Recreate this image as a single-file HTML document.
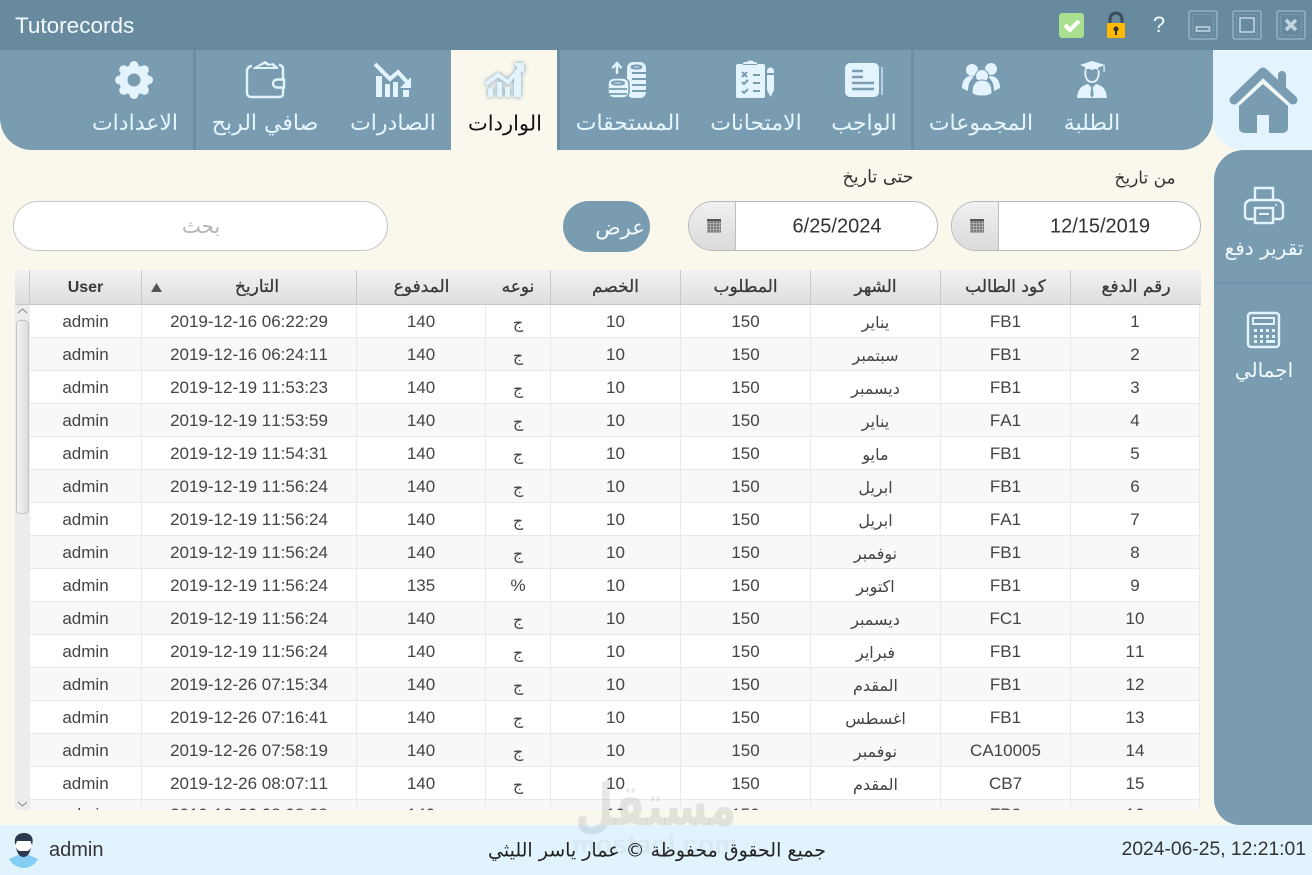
<!DOCTYPE html>
<html lang="ar"><head><meta charset="utf-8"><title>Tutorecords</title>
<style>
*{box-sizing:border-box}
html,body{margin:0;padding:0}
body{width:1312px;height:875px;overflow:hidden;position:relative;background:#faf8ec;font-family:"DejaVu Sans","Liberation Sans",sans-serif;color:#333}
.a{position:absolute}
.t{position:absolute;white-space:nowrap;transform:translate(-50%,-50%);line-height:1}
.nav{font-size:22px;color:#e6f6ff;top:124px}
svg{position:absolute;overflow:visible}
.fld{position:absolute;top:201px;height:50px;border:1px solid #b8b8b8;border-radius:25px;background:#fff;overflow:hidden}
.fld i{position:absolute;left:0;top:0;bottom:0;width:47px;background:linear-gradient(#f0f0f0,#dadada);border-right:1px solid #bdbdbd}
.fld b{position:absolute;left:18px;top:17px;width:14px;height:14px;background-color:#777;background-image:repeating-linear-gradient(0deg,#aaa 0 1px,transparent 1px 3px),repeating-linear-gradient(90deg,#aaa 0 1px,transparent 1px 3px);border-top:2px solid #555}
.v{font:20px "Liberation Sans",sans-serif;color:#333;top:227px}
table{position:absolute;left:30px;top:0;width:1170px;border-collapse:separate;border-spacing:0;table-layout:fixed;font:17px "Liberation Sans","DejaVu Sans",sans-serif;font-kerning:none;color:#444}
td{height:33px;padding:2px 0 0;text-align:center;border-right:1px solid #e9e9e9;border-bottom:1px solid #e9e9e9;white-space:nowrap;overflow:hidden}
td.ar{font:16px "DejaVu Sans",sans-serif}
tr:nth-child(even) td{background:#f8f8f8}
tr:nth-child(odd) td{background:#fff}
.hc{position:absolute;top:270px;height:35px;background:linear-gradient(#f2f2f2,#dedede);border-right:1px solid #c8c8c8;border-bottom:1px solid #c8c8c8;font:17px "DejaVu Sans",sans-serif;-webkit-text-stroke:.3px #3a3a3a;color:#3a3a3a;text-align:center;line-height:35px}
</style></head><body>

<!-- title bar -->
<div class="a" style="left:0;top:0;width:1312px;height:50px;background:#678a9f"></div>
<div class="a" style="left:15px;top:12px;font:22.500px/27px 'Liberation Sans',sans-serif;color:#f4fbff">Tutorecords</div>

<svg style="left:0;top:0" width="1312" height="50">
  <rect x="1059" y="13" width="25" height="25" rx="3" fill="#a9e08f"/>
  <path d="M1065 25l5 5 9-9" fill="none" stroke="#fff" stroke-width="4"/>
  <path d="M1110 24v-5a6 6 0 0 1 12 0v5" fill="none" stroke="#3d4a5c" stroke-width="3"/>
  <rect x="1107" y="23" width="18" height="15" rx="1" fill="#ffb900"/>
  <circle cx="1116" cy="29" r="2.500" fill="#333"/><rect x="1115" y="29" width="2" height="6" fill="#333"/>
  <g fill="none" stroke="#94b1c3" stroke-width="1.500">
    <rect x="1189" y="11" width="28" height="28" rx="2"/>
    <rect x="1233" y="11" width="28" height="28" rx="2"/>
    <rect x="1277" y="11" width="28" height="28" rx="2"/>
  </g>
  <g fill="none" stroke="#86a6b9" stroke-width="1" stroke-dasharray="1.500 1.500">
    <rect x="1192.500" y="14.500" width="21" height="21"/>
    <rect x="1236.500" y="14.500" width="21" height="21"/>
    <rect x="1280.500" y="14.500" width="21" height="21"/>
  </g>
  <g fill="none" stroke="#c3d6e2">
    <rect x="1196.500" y="27" width="13" height="4" stroke-width="1.500"/>
    <rect x="1240" y="18" width="14" height="14" stroke-width="1.500"/>
    <path d="M1286 20l10 10M1296 20l-10 10" stroke-width="3.500"/>
  </g>
</svg>
<div class="t" style="left:1159px;top:25px;font:22px 'Liberation Sans',sans-serif;color:#f4fbff">?</div>

<!-- home tile -->
<div class="a" style="left:1213px;top:50px;width:99px;height:100px;background:#e3f4ff;border-bottom-left-radius:30px"></div>
<!-- nav -->
<div class="a" style="left:0;top:50px;width:1213px;height:100px;background:#7a9cb1;border-radius:0 0 32px 32px"></div>
<div class="a" style="left:451px;top:50px;width:106px;height:100px;background:#faf8ec"></div>
<div class="a" style="left:193px;top:50px;width:3px;height:100px;background:#6a8ea4"></div>
<div class="a" style="left:557px;top:50px;width:3px;height:100px;background:#6a8ea4"></div>
<div class="a" style="left:911px;top:50px;width:3px;height:100px;background:#6a8ea4"></div>

<svg style="left:0;top:0" width="1312" height="150">
 <g fill="#e3f4ff">
  <!-- gear -->
  <g transform="translate(134 80)">
    <circle r="15"/>
    <circle cx="0" cy="-14.500" r="4.500"/><circle cx="0" cy="14.500" r="4.500"/><circle cx="14.500" cy="0" r="4.500"/><circle cx="-14.500" cy="0" r="4.500"/><circle cx="10.300" cy="10.300" r="4.500"/><circle cx="-10.300" cy="10.300" r="4.500"/><circle cx="10.300" cy="-10.300" r="4.500"/><circle cx="-10.300" cy="-10.300" r="4.500"/>
    <circle r="6.500" fill="#7a9cb1"/>
  </g>
  <!-- wallet -->
  <g fill="none" stroke="#e3f4ff" stroke-width="2.400">
    <path d="M283 79V69c0-3-2-4-4-4M283 88v6a3 3 0 0 1-3 3H251a4 4 0 0 1-4-4V71a5 5 0 0 1 5-5"/>
    <path d="M284 79.500h-7a4 4 0 0 0 0 8h7z"/>
  </g>
  <path d="M253 68l12-7 5 3 3-1 6 5-2 1h-24z"/>
  <path d="M258 67l7-3 3 2 3-1 3 2z" fill="#7a9cb1"/>
  <!-- expense chart -->
  <path d="M375 64L390 79 398 72 407 82" fill="none" stroke="#e3f4ff" stroke-width="4"/>
  <path d="M411 77v11h-11z"/>
  <path d="M376 76h6v21h-6zM385 84h5v13h-5zM393 82h5v15h-5z"/><rect x="403" y="90" width="6" height="7"/>
  <!-- income chart -->
  <g style="filter:drop-shadow(0 0 2px #6f93a9)">
    <path d="M486 84L498 75 508 82 520 68" fill="none" stroke="#e3f4ff" stroke-width="4"/>
    <path d="M513 63h11v11z"/>
    <path d="M488 89l5-3v11h-5zM497 82h5v15h-5zM505 87h5v10h-5zM514 76l7-7v28h-7z"/>
  </g>
  <!-- coins -->
  <rect x="627" y="62" width="19" height="36" rx="6"/>
  <rect x="608" y="78" width="21" height="20" rx="6" stroke="#7a9cb1" stroke-width="1.500"/>
  <g fill="none" stroke="#7a9cb1" stroke-width="2">
    <ellipse cx="636.500" cy="67" rx="5" ry="1.500"/>
    <path d="M632 73h14M632 79h14M632 85h14M632 91h14"/>
    <ellipse cx="618" cy="83" rx="6" ry="1.500"/>
    <path d="M609 89h18M609 94h18" stroke-width="1.800"/>
  </g>
  <path d="M617 74V63M612.500 68l4.500-5 4.500 5" fill="none" stroke="#e3f4ff" stroke-width="2.400"/>
  <!-- clipboard -->
  <path d="M738 64h5c0-2 2-2 4-2 1-2 6-2 7 0 2 0 3 0 3 2h6a2 2 0 0 1 2 2v30a2 2 0 0 1-2 2h-25a2 2 0 0 1-2-2V66a2 2 0 0 1 2-2z"/>
  <path d="M767 71a3.500 3.500 0 0 1 7 0v2h-7zM767 75h7v15l-3.500 7-3.500-7z"/>
  <g fill="none" stroke="#7a9cb1" stroke-width="2">
    <path d="M742 72l5 5M747 72l-5 5M742 82l2 2 4-4M742 91l2 2 4-4M753 75h7M753 83h7M753 91h7"/>
    <path d="M743 64.500h14" stroke-width="1"/>
  </g>
  <!-- homework -->
  <rect x="845" y="63" width="34" height="34" rx="5"/>
  <path d="M882 67v28" stroke="#e3f4ff" stroke-width="1.200"/>
  <g fill="none" stroke="#7a9cb1" stroke-width="2.400"><path d="M852 71h11M852 77h11M852 83h22M852 89h22"/></g>
  <!-- group -->
  <circle cx="972" cy="70" r="6"/><circle cx="991" cy="69" r="6"/>
  <path d="M962 88c0-8 4-12 9-12l3 1c-4 3-6 7-6 14zM1000 88c0-8-4-12-9-12l-3 1c4 3 6 7 6 14z"/>
  <circle cx="982" cy="76" r="6.500" stroke="#7a9cb1"/>
  <path d="M972 93c0-9 4-13 10-13s10 4 10 13c-3 4-17 4-20 0z" stroke="#7a9cb1"/>
  <!-- student -->
  <path d="M1080 65l12-4 13 4-13 5z"/><rect x="1103.500" y="65" width="1.200" height="7"/>
  <path d="M1085 67v3c4-2 9-2 13 0v-3l-6 2z"/>
  <path d="M1085.500 70c-1 8 2 12 6.500 12s7.500-4 6.500-12" fill="none" stroke="#e3f4ff" stroke-width="1.800"/>
  <path d="M1077 98c1-9 4-12 11-14l4 4 4-4c7 2 10 5 11 14z"/>
  <path d="M1091.300 87h1.400l1 8-1.700 3-1.700-3z" fill="#7a9cb1"/>
 </g>
 <!-- home -->
 <g>
  <path d="M1282 86V75" stroke="#7a9cb1" stroke-width="8" stroke-linecap="round"/>
  <path d="M1234 100l29-28 30 28" fill="none" stroke="#7a9cb1" stroke-width="9" stroke-linecap="round" stroke-linejoin="round"/>
  <path d="M1263 84l-24 22v22a5 5 0 0 0 5 5h13v-18h12v18h14a5 5 0 0 0 5-5v-22z" fill="#7a9cb1"/>
  <path d="M1240 103l23-21 24 21" fill="none" stroke="#faf8ec" stroke-width="2"/>
 </g>
</svg>

<span class="t nav" style="left:135px">الاعدادات</span>
<span class="t nav" style="left:265px">صافي الربح</span>
<span class="t nav" style="left:393px">الصادرات</span>
<span class="t nav" style="left:505px;color:#111;font-size:21px">الواردات</span>
<span class="t nav" style="left:628px">المستحقات</span>
<span class="t nav" style="left:756px">الامتحانات</span>
<span class="t nav" style="left:864px">الواجب</span>
<span class="t nav" style="left:981px">المجموعات</span>
<span class="t nav" style="left:1092px">الطلبة</span>

<!-- sidebar -->
<div class="a" style="left:1214px;top:150px;width:98px;height:675px;background:#7a9cb1;border-radius:30px 0 0 26px"></div>
<div class="a" style="left:1214px;top:282px;width:98px;height:2px;background:#6f93a9"></div>
<svg style="left:0;top:0" width="1312" height="400">
 <g fill="none" stroke="#e3f4ff" stroke-width="2.400">
  <path d="M1254 219h-6a3 3 0 0 1-3-3v-10a6 6 0 0 1 6-6h26a6 6 0 0 1 6 6v10a3 3 0 0 1-3 3h-6"/>
  <path d="M1255 200v-12h18v12"/>
  <rect x="1255" y="208" width="18" height="15"/>
  <path d="M1259 214h10" stroke-width="2"/>
  <rect x="1248" y="313" width="31" height="34" rx="3"/>
  <rect x="1253" y="318" width="21" height="6" stroke-width="2"/>
 </g>
 <g fill="#e3f4ff"><circle cx="1276" cy="205" r="1"/><rect x="1254" y="329" width="3" height="3"/><rect x="1260" y="329" width="3" height="3"/><rect x="1266" y="329" width="3" height="3"/><rect x="1272" y="329" width="3" height="3"/><rect x="1254" y="335" width="3" height="3"/><rect x="1260" y="335" width="3" height="3"/><rect x="1266" y="335" width="3" height="3"/><rect x="1272" y="335" width="3" height="3"/><rect x="1254" y="340" width="3" height="3"/><rect x="1260" y="340" width="3" height="3"/><rect x="1266" y="340" width="9" height="3"/></g>
</svg>
<span class="t" style="left:1264px;top:248px;font-size:20px;color:#f0faff">تقرير دفع</span>
<span class="t" style="left:1264px;top:370px;font-size:20px;color:#f0faff">اجمالي</span>

<!-- filter row -->
<span class="t" style="left:1145px;top:179px;font-size:17px;color:#333">من تاريخ</span>
<span class="t" style="left:878px;top:178px;font-size:17.500px;color:#333">حتى تاريخ</span>
<div class="fld" style="left:951px;width:250px"><i></i><b></b></div>
<div class="fld" style="left:688px;width:250px"><i></i><b></b></div>
<span class="t v" style="left:1100px">12/15/2019</span>
<span class="t v" style="left:837px">6/25/2024</span>
<div class="a" style="left:563px;top:201px;width:87px;height:51px;border-radius:26px;background:#7a9cb1"></div>
<span class="t" style="left:620px;top:228px;font-size:21px;color:#f0faff">عرض</span>
<div class="a" style="left:13px;top:201px;width:375px;height:50px;border:1px solid #c6c6c6;border-radius:25px;background:#fff"></div>
<span class="t" style="left:201px;top:226px;font-size:20px;color:#b5b5b5">بحث</span>

<!-- table header -->
<div class="hc" style="left:15px;width:15px"></div>
<div class="hc" style="left:30px;width:112px;font:bold 16px/35px 'Liberation Sans',sans-serif;-webkit-text-stroke:0">User</div>
<div class="hc" style="left:142px;width:215px;padding-left:16px">التاريخ</div>
<svg style="left:151px;top:283px" width="12" height="10"><path d="M0 9L5.500 0 11 9z" fill="#555"/></svg>
<div class="hc" style="left:357px;width:130px">المدفوع</div>
<div class="hc" style="left:486px;width:65px">نوعه</div>
<div class="hc" style="left:551px;width:130px">الخصم</div>
<div class="hc" style="left:681px;width:130px">المطلوب</div>
<div class="hc" style="left:811px;width:130px">الشهر</div>
<div class="hc" style="left:941px;width:130px">كود الطالب</div>
<div class="hc" style="left:1071px;width:130px;border-right:0">رقم الدفع</div>

<!-- rows clip -->
<div class="a" style="left:0;top:305px;width:1312px;height:505px;overflow:hidden">
<table>
<colgroup><col style="width:112px"><col style="width:215px"><col style="width:129px"><col style="width:65px"><col style="width:130px"><col style="width:130px"><col style="width:130px"><col style="width:130px"><col style="width:129px"></colgroup>
<tr><td>admin</td><td>2019-12-16 06:22:29</td><td>140</td><td class="ar">ج</td><td>10</td><td>150</td><td class="ar">يناير</td><td>FB1</td><td>1</td></tr>
<tr><td>admin</td><td>2019-12-16 06:24:11</td><td>140</td><td class="ar">ج</td><td>10</td><td>150</td><td class="ar">سبتمبر</td><td>FB1</td><td>2</td></tr>
<tr><td>admin</td><td>2019-12-19 11:53:23</td><td>140</td><td class="ar">ج</td><td>10</td><td>150</td><td class="ar">ديسمبر</td><td>FB1</td><td>3</td></tr>
<tr><td>admin</td><td>2019-12-19 11:53:59</td><td>140</td><td class="ar">ج</td><td>10</td><td>150</td><td class="ar">يناير</td><td>FA1</td><td>4</td></tr>
<tr><td>admin</td><td>2019-12-19 11:54:31</td><td>140</td><td class="ar">ج</td><td>10</td><td>150</td><td class="ar">مايو</td><td>FB1</td><td>5</td></tr>
<tr><td>admin</td><td>2019-12-19 11:56:24</td><td>140</td><td class="ar">ج</td><td>10</td><td>150</td><td class="ar">ابريل</td><td>FB1</td><td>6</td></tr>
<tr><td>admin</td><td>2019-12-19 11:56:24</td><td>140</td><td class="ar">ج</td><td>10</td><td>150</td><td class="ar">ابريل</td><td>FA1</td><td>7</td></tr>
<tr><td>admin</td><td>2019-12-19 11:56:24</td><td>140</td><td class="ar">ج</td><td>10</td><td>150</td><td class="ar">نوفمبر</td><td>FB1</td><td>8</td></tr>
<tr><td>admin</td><td>2019-12-19 11:56:24</td><td>135</td><td>%</td><td>10</td><td>150</td><td class="ar">اكتوبر</td><td>FB1</td><td>9</td></tr>
<tr><td>admin</td><td>2019-12-19 11:56:24</td><td>140</td><td class="ar">ج</td><td>10</td><td>150</td><td class="ar">ديسمبر</td><td>FC1</td><td>10</td></tr>
<tr><td>admin</td><td>2019-12-19 11:56:24</td><td>140</td><td class="ar">ج</td><td>10</td><td>150</td><td class="ar">فبراير</td><td>FB1</td><td>11</td></tr>
<tr><td>admin</td><td>2019-12-26 07:15:34</td><td>140</td><td class="ar">ج</td><td>10</td><td>150</td><td class="ar">المقدم</td><td>FB1</td><td>12</td></tr>
<tr><td>admin</td><td>2019-12-26 07:16:41</td><td>140</td><td class="ar">ج</td><td>10</td><td>150</td><td class="ar">اغسطس</td><td>FB1</td><td>13</td></tr>
<tr><td>admin</td><td>2019-12-26 07:58:19</td><td>140</td><td class="ar">ج</td><td>10</td><td>150</td><td class="ar">نوفمبر</td><td>CA10005</td><td>14</td></tr>
<tr><td>admin</td><td>2019-12-26 08:07:11</td><td>140</td><td class="ar">ج</td><td>10</td><td>150</td><td class="ar">المقدم</td><td>CB7</td><td>15</td></tr>
<tr><td style="padding-bottom:5px">admin</td><td style="padding-bottom:5px">2019-12-26 08:08:08</td><td style="padding-bottom:5px">140</td><td class="ar">ج</td><td style="padding-bottom:5px">10</td><td style="padding-bottom:5px">150</td><td class="ar">يناير</td><td style="padding-bottom:5px">FB2</td><td style="padding-bottom:5px">16</td></tr>
</table>
<div class="a" style="left:15px;top:0;width:15px;height:505px;background:#ececec"></div>
<div class="a" style="left:16px;top:15px;width:13px;height:194px;border:1px solid #c4c4c4;border-radius:4px;background:linear-gradient(90deg,#f4f4f4,#dcdcdc)"></div>
<svg style="left:15px;top:0" width="15" height="505"><path d="M3 8l4.500-4 4.500 4M3 497l4.500 4 4.500-4" fill="none" stroke="#888"/></svg>
</div>

<!-- status bar -->
<div class="a" style="left:0;top:825px;width:1312px;height:50px;background:#e1f4fe"></div>
<svg style="left:8px;top:833px" width="32" height="36">
  <path d="M1 26l9-4h11l9 4c-3 6-9 9-14 9S4 32 1 26z" fill="#85cdf5"/>
  <ellipse cx="15.500" cy="13" rx="8" ry="10" fill="#fff"/>
  <path d="M7.500 12C5 4 10 0 16 0s10.500 4 8 12l-1.500-4H9z" fill="#2b3a4d"/>
  <path d="M8 14c1 7 4 10 7.500 10s6.500-3 7.500-10c-1 3-3 4-4 4h-7c-1 0-3-1-4-4z" fill="#2b3a4d"/>
</svg>
<div class="a" style="left:49px;top:838px;font:20px/24px 'Liberation Sans',sans-serif;color:#333">admin</div>
<span class="t" style="left:657px;top:851px;font-size:19px;color:#222">جميع الحقوق محفوظة © عمار ياسر الليثي</span>
<div class="a" style="right:6px;top:839px;font:19.300px/22px 'Liberation Sans',sans-serif;color:#333">2024-06-25, 12:21:01</div>

<!-- watermark -->
<span class="t" style="left:656px;top:805px;font-size:58px;font-weight:bold;color:rgba(110,110,110,.16);transform:translate(-50%,-50%) scale(.76,1)">مستقل</span>
<span class="t" style="left:655px;top:845px;font:bold 27px 'Liberation Sans',sans-serif;color:rgba(110,110,110,.08)">mostaql.com</span>
</body></html>
